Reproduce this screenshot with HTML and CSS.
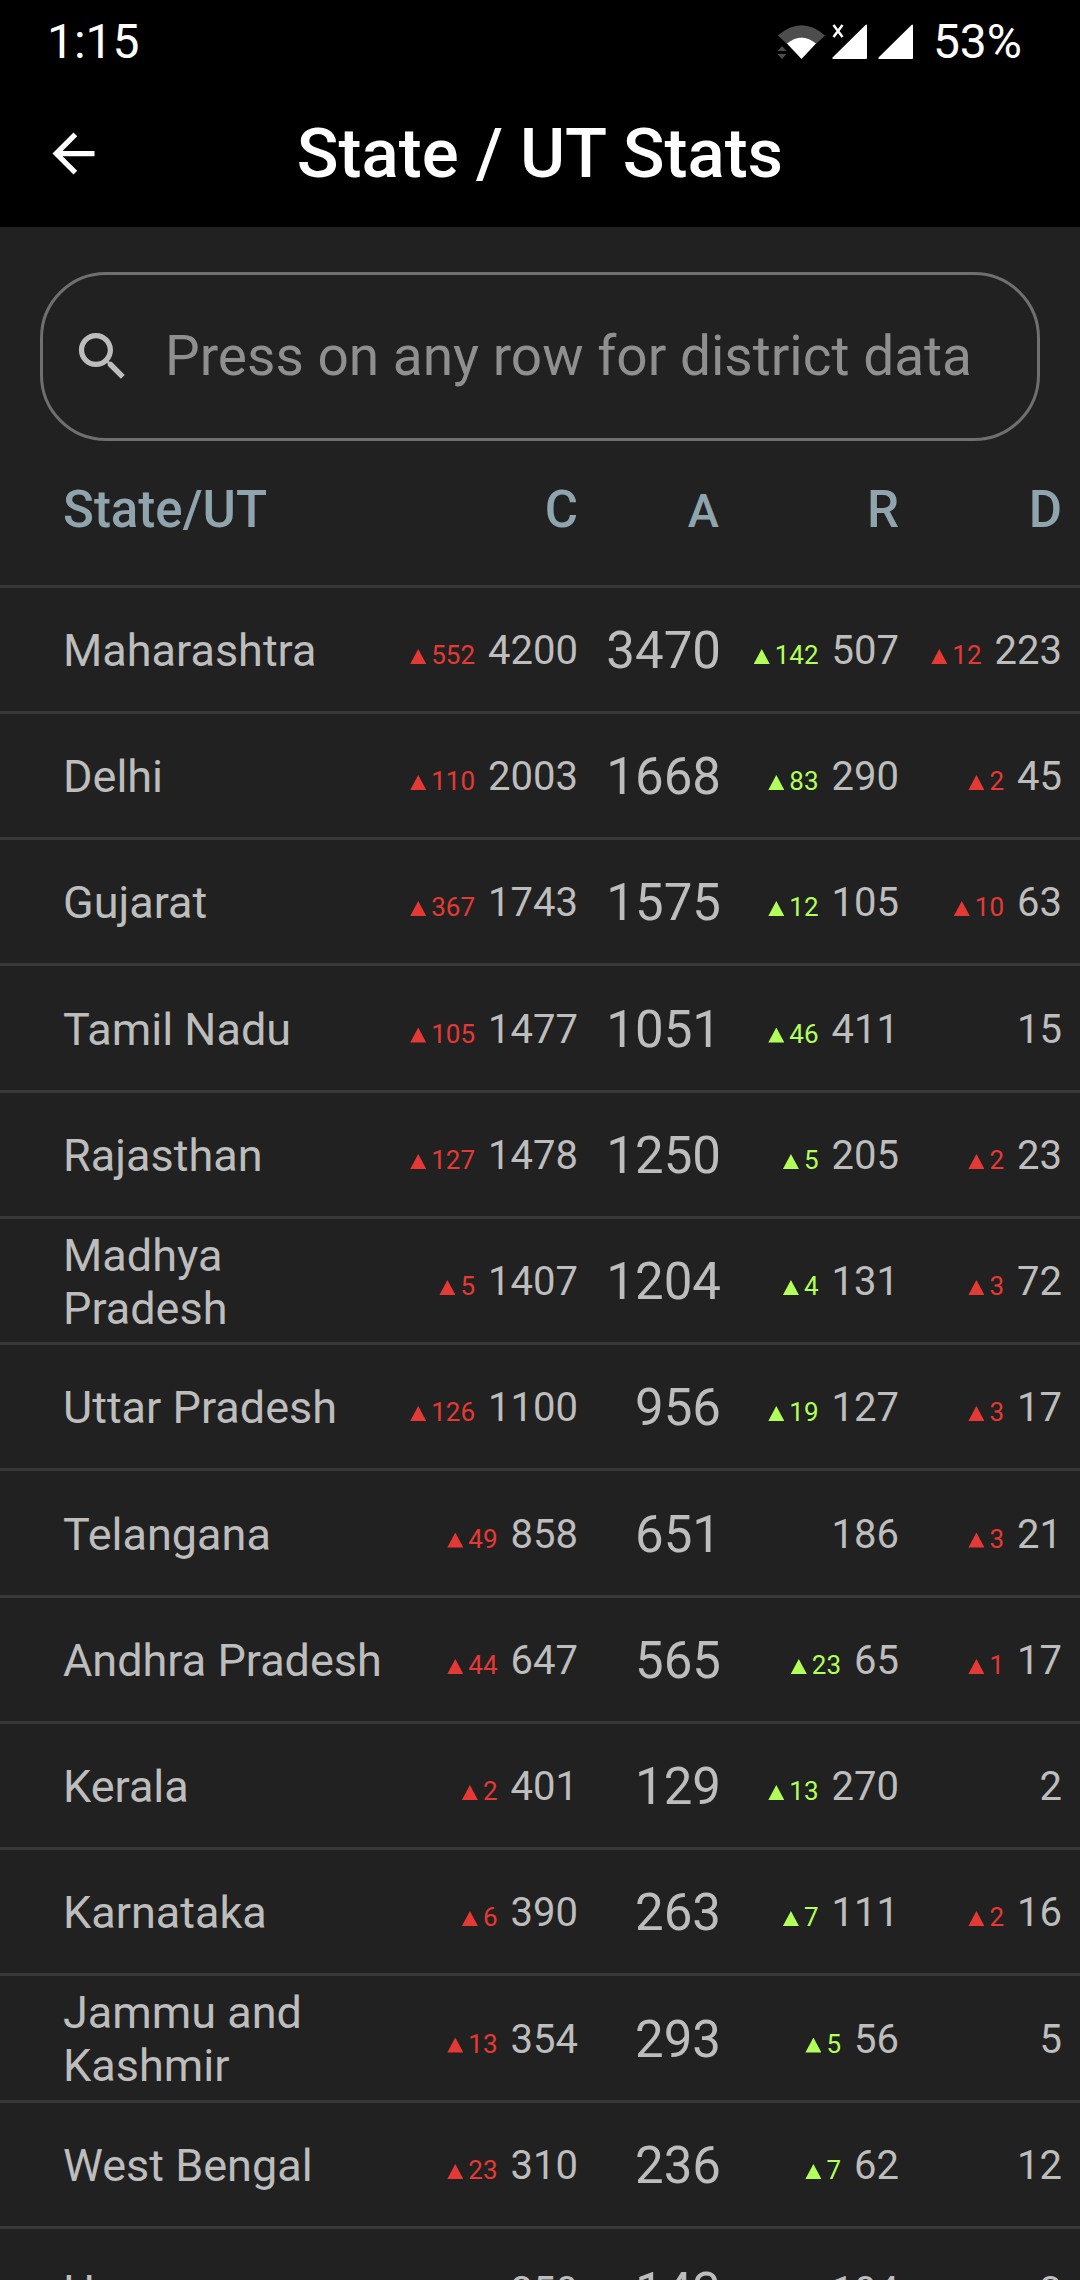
FILE: index.html
```html
<!DOCTYPE html>
<html lang="en">
<head>
<meta charset="utf-8">
<meta name="viewport" content="width=device-width, initial-scale=1">
<title>State / UT Stats</title>
<link rel="stylesheet" href="styles.css">
</head>
<body>
<div class="app">
  <div class="status-bar">
    <span>1:15</span>
    <div class="status-icons">
      <svg class="status-wifi" viewBox="0 0 50 36" aria-hidden="true">
        <path fill="#4d4d4d" d="M1 11.500Q24.500-9 48 11.500L39 20Q24.500 7 10 20z"/>
        <path fill="#fff" d="M10 19.500Q24.500 7.500 39 19.500L24.500 35z"/>
        <path fill="#4d4d4d" d="M.5 27H9.500L5 22zM.5 30H9.500L5 35z"/>
      </svg>
      <svg class="status-signal" viewBox="0 0 35 36" aria-hidden="true">
        <path fill="#fff" d="M33 1.500Q35-.5 35 2V34Q35 35 34 35H2Q-1 35 1 33z"/>
        <path stroke="#fff" stroke-width="2.500" fill="none" d="M1.500 1L10.500 13M10.500 1L1.500 13"/>
      </svg>
      <svg class="status-signal" viewBox="0 0 35 36" aria-hidden="true">
        <path fill="#fff" d="M33 1.500Q35-.5 35 2V34Q35 35 34 35H2Q-1 35 1 33z"/>
      </svg>
      <span class="battery">53%</span>
    </div>
  </div>

  <header class="app-bar">
    <button class="back" type="button" aria-label="Back">
      <svg class="icon" viewBox="0 0 24 24" aria-hidden="true"><path fill="#fff" d="M20 11H7.830l5.590-5.590L12 4l-8 8 8 8 1.410-1.410L7.830 13H20v-2z"/></svg>
    </button>
    <h1 class="title">State / UT Stats</h1>
  </header>

  <main class="content">
    <label class="search">
      <svg class="icon" viewBox="0 0 24 24" aria-hidden="true"><path fill="#bdbdbd" d="M15.500 14h-.79l-.28-.27C15.410 12.590 16 11.110 16 9.500 16 5.910 13.090 3 9.500 3S3 5.910 3 9.500 5.910 16 9.500 16c1.610 0 3.090-.59 4.230-1.570l.27.28v.79l5 4.990L20.490 19l-4.990-5zm-6 0C7.010 14 5 11.990 5 9.500S7.010 5 9.500 5 14 7.010 14 9.500 11.990 14 9.500 14z"/></svg>
      <input class="search-input" type="text" aria-label="Search states" placeholder="Press on any row for district data">
    </label>

    <table class="stats">
      <colgroup>
        <col>
        <col class="col-c">
        <col class="col-a">
        <col class="col-r">
        <col class="col-d">
      </colgroup>
      <thead>
        <tr><th scope="col">State/UT</th><th scope="col">C</th><th scope="col" class="head-a">A</th><th scope="col">R</th><th scope="col">D</th></tr>
      </thead>
      <tbody>
        <tr><th scope="row">Maharashtra</th><td><span class="up">552</span>4200</td><td>3470</td><td><span class="up good">142</span>507</td><td><span class="up">12</span>223</td></tr>
        <tr><th scope="row">Delhi</th><td><span class="up">110</span>2003</td><td>1668</td><td><span class="up good">83</span>290</td><td><span class="up">2</span>45</td></tr>
        <tr><th scope="row">Gujarat</th><td><span class="up">367</span>1743</td><td>1575</td><td><span class="up good">12</span>105</td><td><span class="up">10</span>63</td></tr>
        <tr><th scope="row">Tamil Nadu</th><td><span class="up">105</span>1477</td><td>1051</td><td><span class="up good">46</span>411</td><td>15</td></tr>
        <tr><th scope="row">Rajasthan</th><td><span class="up">127</span>1478</td><td>1250</td><td><span class="up good">5</span>205</td><td><span class="up">2</span>23</td></tr>
        <tr><th scope="row">Madhya Pradesh</th><td><span class="up">5</span>1407</td><td>1204</td><td><span class="up good">4</span>131</td><td><span class="up">3</span>72</td></tr>
        <tr><th scope="row">Uttar Pradesh</th><td><span class="up">126</span>1100</td><td>956</td><td><span class="up good">19</span>127</td><td><span class="up">3</span>17</td></tr>
        <tr><th scope="row">Telangana</th><td><span class="up">49</span>858</td><td>651</td><td>186</td><td><span class="up">3</span>21</td></tr>
        <tr><th scope="row">Andhra Pradesh</th><td><span class="up">44</span>647</td><td>565</td><td><span class="up good">23</span>65</td><td><span class="up">1</span>17</td></tr>
        <tr><th scope="row">Kerala</th><td><span class="up">2</span>401</td><td>129</td><td><span class="up good">13</span>270</td><td>2</td></tr>
        <tr><th scope="row">Karnataka</th><td><span class="up">6</span>390</td><td>263</td><td><span class="up good">7</span>111</td><td><span class="up">2</span>16</td></tr>
        <tr><th scope="row">Jammu and Kashmir</th><td><span class="up">13</span>354</td><td>293</td><td><span class="up good">5</span>56</td><td>5</td></tr>
        <tr><th scope="row">West Bengal</th><td><span class="up">23</span>310</td><td>236</td><td><span class="up good">7</span>62</td><td>12</td></tr>
        <tr><th scope="row">Haryana</th><td>250</td><td>143</td><td>104</td><td>3</td></tr>
      </tbody>
    </table>
  </main>
</div>
</body>
</html>
```
FILE: styles.css
```css
* {
  box-sizing: border-box;
}

body {
  margin: 0;
  background: #212121;
  color: #bdbdbd;
  font-family: Roboto, "Noto Sans", sans-serif;
}

.app {
  display: flex;
  flex-direction: column;
  height: 100vh;
  overflow: hidden;
}

.status-bar {
  display: flex;
  flex: none;
  justify-content: space-between;
  padding: 12px 58px 12px 47px;
  background: #000;
  color: #fff;
  font-size: 48px;
  line-height: 60px;
}

.status-icons {
  display: flex;
  align-items: center;
}

.status-wifi {
  width: 50px;
  height: 36px;
  margin-right: 5px;
}

.status-signal {
  width: 35px;
  height: 36px;
  margin-right: 11px;
}

.battery {
  margin-left: 9px;
}

.app-bar {
  display: grid;
  flex: none;
  grid-template-columns: 105px 1fr 105px;
  align-items: center;
  height: 143px;
  padding-bottom: 4px;
  background: #000;
}

.back {
  display: flex;
  justify-content: flex-end;
  padding: 0;
  border: 0;
  background: none;
}

.icon {
  flex: none;
  width: 63px;
  height: 63px;
}

.title {
  margin: 0;
  color: #fff;
  font-size: 69px;
  font-weight: 500;
  line-height: 80px;
  text-align: center;
}

.content {
  flex: 1;
  min-height: 0;
  overflow-y: auto;
  scrollbar-width: none;
}

.search {
  display: flex;
  align-items: center;
  gap: 31px;
  height: 169px;
  margin: 45px 40px 0;
  padding: 0 28px;
  border: 3px solid #6f6f6f;
  border-radius: 66px;
}

.search-input {
  flex: 1;
  min-width: 0;
  padding: 0 0 2px;
  border: 0;
  outline: 0;
  background: none;
  color: #bdbdbd;
  font: inherit;
  font-size: 55px;
  line-height: 64px;
}

.search-input::placeholder {
  color: #8f8f8f;
  opacity: 1;
}

.stats {
  width: 100%;
  border-spacing: 0;
  table-layout: fixed;
  font-size: 40px;
}

.col-c {
  width: 194px;
}

.col-a {
  width: 143px;
}

.col-r {
  width: 178px;
}

.col-d {
  width: 181px;
}

.stats th,
.stats td {
  padding: 0;
  text-align: right;
}

.stats th:first-child {
  padding-left: 63px;
  text-align: left;
}

.stats th:last-child,
.stats td:last-child {
  padding-right: 18px;
}

.stats thead th {
  padding-top: 39px;
  padding-bottom: 44px;
  color: #90a4ae;
  font-size: 51px;
  font-weight: 500;
  line-height: 60px;
  vertical-align: baseline;
}

.stats thead .head-a {
  padding-right: 2px;
  font-size: 47px;
}

.stats tbody tr {
  height: 126px;
}

/* rows average slightly over 126px */
.stats tbody tr:nth-child(4n) {
  height: 127px;
}

.stats tbody th,
.stats tbody td {
  padding-top: 2px;
  border-top: 3px solid #383838;
  vertical-align: middle;
}

.stats tbody th {
  font-size: 45px;
  font-weight: 400;
  line-height: 53px;
}

.stats tbody td:nth-child(3) {
  font-size: 51px;
}

.up {
  margin-right: 13px;
  color: #e53935;
  font-size: 26px;
}

.up::before {
  content: "";
  display: inline-block;
  width: 16px;
  height: 15px;
  margin-right: 5px;
  background: currentColor;
  clip-path: polygon(50% 0, 100% 100%, 0 100%);
}

.good {
  color: #b2ff59;
}
```
